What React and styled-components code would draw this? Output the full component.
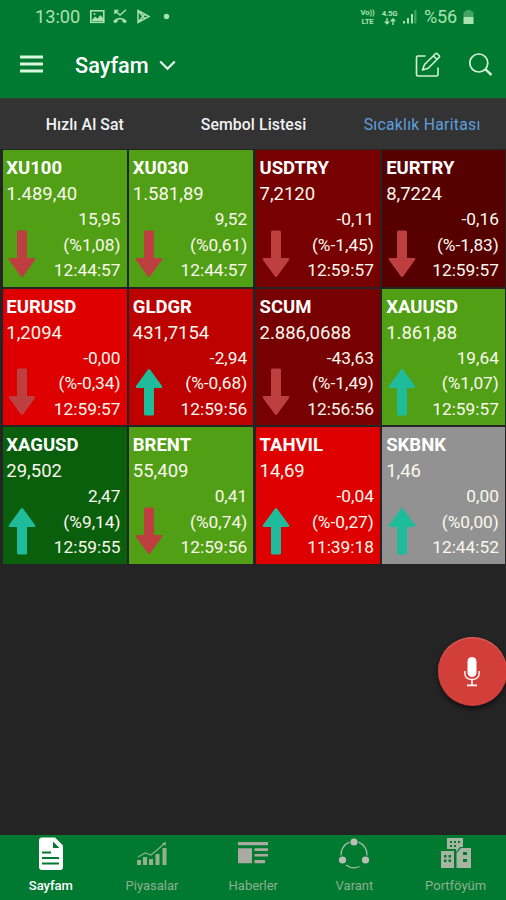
import React, {useState} from "react";
import styled, { createGlobalStyle } from "styled-components";

const GlobalStyle = createGlobalStyle`
    * {
        box-sizing: border-box;
    }

    body {
        margin: 0;
        background: #242424;
        font-family: Roboto, 'Liberation Sans', sans-serif;
    }
`;

const Screen = styled.div`
    display: flex;
    flex-direction: column;
    width: 506px;
    height: 900px;
    overflow: hidden;
    position: relative;
    background: #242424;
`;

const StatusBar = styled.div`
    display: flex;
    justify-content: space-between;
    align-items: center;
    height: 33px;
    padding: 0 32px 0 35px;
    background: #007a30;
    color: #a9e2b0;
    font-size: 18.2px;
`;

const StatusGroup = styled.div`
    display: flex;
    align-items: center;

    svg {
        display: block;
    }
`;

const Clock = styled.span`
    width: 54px;
`;

const Network = styled.span`
    display: flex;
    flex-direction: column;
    align-items: center;
    width: ${(props) => props.$width}px;
    font-size: 7.8px;
    font-weight: 700;
    line-height: 9px;
    letter-spacing: -0.2px;
`;

const Percent = styled.span`
    width: 35px;
    margin-left: 7px;
    margin-right: 4px;
    font-size: 18px;
    letter-spacing: -0.2px;
`;

const AppBar = styled.header`
    display: flex;
    align-items: center;
    height: 65px;
    padding: 0 13px 2px 20px;
    background: #007a30;
    color: white;

    svg {
        display: block;
    }
`;

const IconButton = styled.button`
    padding: 0;
    border: none;
    background: none;
    color: inherit;
    cursor: pointer;
`;

const Title = styled.button`
    display: flex;
    align-items: center;
    gap: 10px;
    margin-left: 32px;
    padding: 2px 0 0;
    border: none;
    background: none;
    color: white;
    font-family: inherit;
    font-size: 21.7px;
    font-weight: 500;
    line-height: 26px;
`;

const Actions = styled.div`
    display: flex;
    align-items: center;
    gap: 28px;
    margin-left: auto;
    color: #d2f3d4;
`;

const Tabs = styled.nav`
    display: grid;
    grid-template-columns: repeat(3, 1fr);
    height: 51px;
    border-top: 1px solid #2b4433;
    background: #333333;
`;

const Tab = styled.button`
    padding: 1px 0 0 1px;
    border: none;
    background: none;
    color: ${(props) => (props.$active ? "#5b9fdf" : "#f2f2f2")};
    font-family: inherit;
    font-size: 15.8px;
    font-weight: ${(props) => (props.$active ? 400 : 500)};
    letter-spacing: ${(props) => (props.$active ? 0.25 : 0.1)}px;
    white-space: nowrap;
    cursor: pointer;
`;

const Grid = styled.main`
    display: grid;
    grid-template-columns: 124px 124.2px 124.2px 122.5px;
    grid-auto-rows: 136.5px;
    gap: 2px 2.5px;
    padding: 1px 0 0 2.5px;
`;

const Cell = styled.div`
    padding: 5px 6px 0 3.8px;
    background: ${(props) => props.$color};
    color: #fbf8ee;
    overflow: hidden;
`;

const Symbol = styled.div`
    height: 26px;
    font-size: 18.5px;
    font-weight: 700;
    line-height: 26px;
    color: white;
`;

const Price = styled.div`
    height: 26px;
    font-size: 18.5px;
    line-height: 26px;
`;

const Details = styled.div`
    display: flex;
    justify-content: space-between;

    svg {
        display: block;
        margin: 22.5px 0 0 2.2px;
        flex-shrink: 0;
    }
`;

const Numbers = styled.div`
    font-size: 17.3px;
    line-height: 25.7px;
    text-align: right;
    white-space: nowrap;
`;

const MicButton = styled.button`
    position: absolute;
    left: 438px;
    top: 637px;
    display: flex;
    justify-content: center;
    align-items: center;
    width: 69px;
    height: 69px;
    padding: 0 1px 0 0;
    border: none;
    border-radius: 50%;
    background: #d23f3a;
    box-shadow: 0 3px 5px rgba(0, 0, 0, 0.55), inset 0 1px 1px #e26560;
`;

const BottomNav = styled.nav`
    display: grid;
    grid-template-columns: repeat(5, 1fr);
    height: 65px;
    margin-top: auto;
    background: #007a30;
`;

const NavItem = styled.button`
    display: flex;
    flex-direction: column;
    align-items: center;
    padding: 0 0 2px 0.5px;
    border: none;
    background: none;
    color: ${(props) => (props.$active ? "white" : "#8fb08f")};
    font-family: inherit;
    font-size: 13px;
    font-weight: ${(props) => (props.$active ? 500 : 400)};
    line-height: 16px;

    svg {
        display: block;
        margin-bottom: 5px;
    }
`;

const LIME = "#519f14";
const RED = "#de0000";
const MAROON = "#770000";

const quotes = [
    { symbol: "XU100", price: "1.489,40", diff: "15,95", rate: "1,08", time: "12:44:57", color: LIME },
    { symbol: "XU030", price: "1.581,89", diff: "9,52", rate: "0,61", time: "12:44:57", color: LIME },
    { symbol: "USDTRY", price: "7,2120", diff: "-0,11", rate: "-1,45", time: "12:59:57", color: MAROON },
    { symbol: "EURTRY", price: "8,7224", diff: "-0,16", rate: "-1,83", time: "12:59:57", color: "#570000" },
    { symbol: "EURUSD", price: "1,2094", diff: "-0,00", rate: "-0,34", time: "12:59:57", color: RED },
    { symbol: "GLDGR", price: "431,7154", diff: "-2,94", rate: "-0,68", time: "12:59:56", color: "#bd0000", up: true },
    { symbol: "SCUM", price: "2.886,0688", diff: "-43,63", rate: "-1,49", time: "12:56:56", color: MAROON },
    { symbol: "XAUUSD", price: "1.861,88", diff: "19,64", rate: "1,07", time: "12:59:57", color: LIME, up: true },
    { symbol: "XAGUSD", price: "29,502", diff: "2,47", rate: "9,14", time: "12:59:55", color: "#095f0b", up: true },
    { symbol: "BRENT", price: "55,409", diff: "0,41", rate: "0,74", time: "12:59:56", color: LIME },
    { symbol: "TAHVIL", price: "14,69", diff: "-0,04", rate: "-0,27", time: "11:39:18", color: RED, up: true },
    { symbol: "SKBNK", price: "1,46", diff: "0,00", rate: "0,00", time: "12:44:52", color: "#929292", up: true },
];

function Arrow({ up }) {
    return (
        <svg width="28" height="48" viewBox="0 0 28 48">
            <path
                d="M9 46V20H1.6Q0 19.5 1 18L13 1.5Q14 .3 15 1.5L27 18Q28 19.5 26.4 20H19V46Q19 47.5 17.5 47.5H10.5Q9 47.5 9 46Z"
                transform={up ? undefined : "rotate(180 14 24)"}
                fill={up ? "#1fbc9c" : "#be3f3f"}
            />
        </svg>
    );
}

function QuoteCell({ quote }) {
    return (
        <Cell $color={quote.color}>
            <Symbol>{quote.symbol}</Symbol>
            <Price>{quote.price}</Price>
            <Details>
                <Arrow up={quote.up} />
                <Numbers>
                    <div>{quote.diff}</div>
                    <div>(%{quote.rate})</div>
                    <div>{quote.time}</div>
                </Numbers>
            </Details>
        </Cell>
    );
}

function PageIcon() {
    return (
        <svg width="32" height="38" viewBox="0 0 32 38">
            <path d="M7 2.5H20L28 10.5V32Q28 35 25 35H7Q4 35 4 32V5.5Q4 2.5 7 2.5Z" fill="white" />
            <path d="M18 6.5L24.5 13H18Z" fill="#007a30" />
            <path d="M7 17.5H16M7 23H24M7 28.5H24" stroke="#007a30" strokeWidth="2.2" fill="none" />
        </svg>
    );
}

function MarketIcon() {
    return (
        <svg width="32" height="38" viewBox="0 0 32 38">
            <path d="M1 25H5V30H1ZM7 22H11V30H7ZM13 24H17V30H13ZM19.5 19H23.5V30H19.5ZM26.5 13H30.5V30H26.5Z" fill="#92b28c" />
            <path d="M2 22L9 18L15 20L21 15L29 8" stroke="#92b28c" strokeWidth="1.2" fill="none" />
            <path d="M26 8.5L30 7L29.5 11Z" fill="#92b28c" />
        </svg>
    );
}

function NewsIcon() {
    return (
        <svg width="32" height="38" viewBox="0 0 32 38">
            <path d="M1 7H31V10.3H1ZM1 13.3H15V28.3H1ZM17.5 13.3H31V16H17.5ZM17.5 19H31V21.6H17.5ZM17.5 25H28V28.3H17.5Z" fill="#a9aaa2" />
        </svg>
    );
}

function WarrantIcon() {
    return (
        <svg width="32" height="38" viewBox="0 0 32 38">
            <path d="M11.5 7.2A13.2 13.2 0 0 0 3 20.5M20.5 7.2A13.2 13.2 0 0 1 29 20.5M8 30A13.2 13.2 0 0 0 21.5 31.5" stroke="#a6bda1" strokeWidth="1.3" fill="none" />
            <circle cx="16" cy="7" r="3.6" fill="#b9bfb5" />
            <circle cx="4.5" cy="25" r="3.6" fill="#b9bfb5" />
            <circle cx="27.5" cy="25" r="3.6" fill="#b9bfb5" />
        </svg>
    );
}

function PortfolioIcon() {
    return (
        <svg width="32" height="38" viewBox="0 0 32 38">
            <path d="M7 3H23V12H20L16 17V14H7Z" fill="#a6b4a1" />
            <path d="M1 16H14V33H1ZM16.5 18L21 13H31V33H16.5Z" fill="#a6b4a1" />
            <path d="M10 6H12V8H10ZM14 6H16V8H14ZM18 6H20V8H18ZM10 10H12V12H10ZM14 10H16V12H14ZM4 20H6.5V22.5H4ZM8.5 20H11V22.5H8.5ZM4 24.5H6.5V27H4ZM8.5 24.5H11V27H8.5ZM23 17H27V20H23ZM23 24H27V27H23Z" fill="#007a30" />
        </svg>
    );
}

const navItems = [
    { label: "Sayfam", Icon: PageIcon },
    { label: "Piyasalar", Icon: MarketIcon },
    { label: "Haberler", Icon: NewsIcon },
    { label: "Varant", Icon: WarrantIcon },
    { label: "Portföyüm", Icon: PortfolioIcon },
];

const tabs = ["Hızlı Al Sat", "Sembol Listesi", "Sıcaklık Haritası"];

function App() {
    const [tab, setTab] = useState(2);
    const [page, setPage] = useState(0);

    return (
        <>
        <GlobalStyle />
        <Screen>
            <StatusBar>
                <StatusGroup>
                    <Clock>13:00</Clock>
                    <svg width="82" height="18" viewBox="0 0 82 18" fill="none" stroke="currentColor">
                        <rect x="1.8" y="2.8" width="13" height="11.5" strokeWidth="1.6" />
                        <path d="M3 12L6 8.5L8.5 10.5L11.5 7L14 10V13H3Z" fill="currentColor" stroke="none" />
                        <circle cx="5.5" cy="6" r="1" fill="currentColor" stroke="none" />
                        <path d="M26 6V2.5H29.5M26.3 2.8L31 7L37 1.8" strokeWidth="1.5" />
                        <path d="M24 13Q31 6.5 38 13L36 15.3L33.3 13.8V11.8Q31 11 28.7 11.8V13.8L26 15.3Z" fill="currentColor" stroke="none" />
                        <path d="M49 2.5L60 8.5L49 14.5ZM49 2.5L56 11M49 14.5L56 6" strokeWidth="1.5" />
                        <circle cx="77.5" cy="8.5" r="2.7" fill="currentColor" stroke="none" />
                    </svg>
                </StatusGroup>
                <StatusGroup>
                    <Network $width={17}>
                        <span>Vo))</span>
                        <span>LTE</span>
                    </Network>
                    <Network $width={27}>
                        <span>4.5G</span>
                        <svg width="12" height="7" viewBox="0 0 12 7" fill="none" stroke="currentColor" strokeWidth="1.4">
                            <path d="M3 0V5.5M.8 3.5L3 5.8L5.2 3.5M9 7V1M6.8 3.2L9 1L11.2 3.2" />
                        </svg>
                    </Network>
                    <svg width="14" height="15" viewBox="0 0 14 15" fill="currentColor">
                        <path d="M0 12H2V14.5H0ZM4 9H6V14.5H4ZM8 5H10V14.5H8Z" />
                        <path d="M11 1H13.5V14.5H11Z" opacity=".35" />
                    </svg>
                    <Percent>%56</Percent>
                    <svg width="11" height="16" viewBox="0 0 11 16" fill="currentColor">
                        <path d="M3 1H8V2.5H10.5V8H.5V2.5H3Z" opacity=".4" />
                        <path d="M.5 8H10.5V15H.5Z" />
                    </svg>
                </StatusGroup>
            </StatusBar>

            <AppBar>
                <IconButton aria-label="Menü">
                    <svg width="23" height="20" viewBox="0 0 23 20" fill="#d9f7dc">
                        <path d="M0 .5H23V3.5H0ZM0 7.5H23V10.5H0ZM0 14.5H23V17.5H0Z" />
                    </svg>
                </IconButton>
                <Title>
                    Sayfam
                    <svg width="17" height="12" viewBox="0 0 17 12" fill="none" stroke="#e6fbe8" strokeWidth="2.2">
                        <path d="M1.2 1.5L8.5 8.8L15.8 1.5" />
                    </svg>
                </Title>
                <Actions>
                    <IconButton aria-label="Düzenle">
                        <svg width="26" height="26" viewBox="0 0 26 26" fill="none" stroke="currentColor" strokeWidth="1.6" strokeLinejoin="round">
                            <path d="M10.5 4H3Q1.5 4 1.5 5.5V22.5Q1.5 24 3 24H21.5Q23 24 23 22.5V15.5" />
                            <path d="M7.5 18L9.5 12.5L20.5 1.8Q21.5 1 22.5 2L24 3.5Q25 4.5 24 5.5L13.2 16.2ZM18.5 4L22 7.5" />
                        </svg>
                    </IconButton>
                    <IconButton aria-label="Ara">
                        <svg width="24" height="24" viewBox="0 0 24 24" fill="none" stroke="currentColor" strokeWidth="1.7">
                            <circle cx="9.8" cy="10" r="9" />
                            <path d="M16.2 16.2L22.5 22" strokeWidth="2.4" />
                        </svg>
                    </IconButton>
                </Actions>
            </AppBar>

            <Tabs>
                {tabs.map((label, i) => (
                    <Tab key={label} $active={tab === i} onClick={() => setTab(i)}>{label}</Tab>
                ))}
            </Tabs>

            <Grid>
                {quotes.map((quote) => (
                    <QuoteCell key={quote.symbol} quote={quote} />
                ))}
            </Grid>

            <MicButton aria-label="Sesli komut">
                <svg width="18" height="32" viewBox="0 0 18 32" fill="none" stroke="#fff1ee">
                    <rect x="4.5" y="1" width="9" height="20" rx="4.5" fill="white" stroke="none" />
                    <path d="M1.8 15V17Q2 23.5 9 23.5Q16 23.5 16.2 17V15" strokeWidth="1.5" />
                    <path d="M9 23.5V29M4 29.3H14" strokeWidth="1.7" />
                </svg>
            </MicButton>

            <BottomNav>
                {navItems.map(({ label, Icon }, i) => (
                    <NavItem key={label} $active={page === i} onClick={() => setPage(i)}>
                        <Icon />
                        {label}
                    </NavItem>
                ))}
            </BottomNav>
        </Screen>
        </>
    );
}

export default App;
